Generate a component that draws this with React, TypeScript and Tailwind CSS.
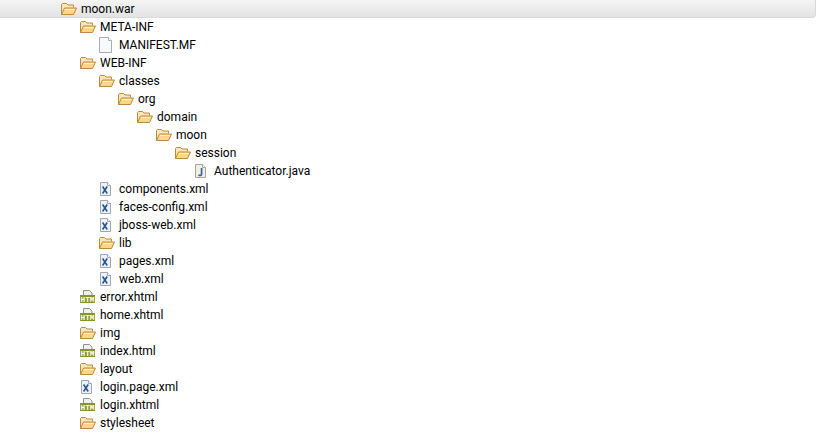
const rows: { name: string; depth: number; icon: 'folder' | 'file' | 'xml' | 'java' | 'html' }[] = [
  { name: 'moon.war', depth: 0, icon: 'folder' },
  { name: 'META-INF', depth: 1, icon: 'folder' },
  { name: 'MANIFEST.MF', depth: 2, icon: 'file' },
  { name: 'WEB-INF', depth: 1, icon: 'folder' },
  { name: 'classes', depth: 2, icon: 'folder' },
  { name: 'org', depth: 3, icon: 'folder' },
  { name: 'domain', depth: 4, icon: 'folder' },
  { name: 'moon', depth: 5, icon: 'folder' },
  { name: 'session', depth: 6, icon: 'folder' },
  { name: 'Authenticator.java', depth: 7, icon: 'java' },
  { name: 'components.xml', depth: 2, icon: 'xml' },
  { name: 'faces-config.xml', depth: 2, icon: 'xml' },
  { name: 'jboss-web.xml', depth: 2, icon: 'xml' },
  { name: 'lib', depth: 2, icon: 'folder' },
  { name: 'pages.xml', depth: 2, icon: 'xml' },
  { name: 'web.xml', depth: 2, icon: 'xml' },
  { name: 'error.xhtml', depth: 1, icon: 'html' },
  { name: 'home.xhtml', depth: 1, icon: 'html' },
  { name: 'img', depth: 1, icon: 'folder' },
  { name: 'index.html', depth: 1, icon: 'html' },
  { name: 'layout', depth: 1, icon: 'folder' },
  { name: 'login.page.xml', depth: 1, icon: 'xml' },
  { name: 'login.xhtml', depth: 1, icon: 'html' },
  { name: 'stylesheet', depth: 1, icon: 'folder' },
];

function FolderIcon() {
  return (
    <svg width="16" height="16" viewBox="0 0 16 16" className="shrink-0">
      <path d="M.5 13.5V3.5l1-1h4l1.5 1.5h5.5v2.5" fill="#f9e6bb" stroke="#b98a3f" strokeLinejoin="round" />
      <path d="M.5 13.5h12l3-6.5h-12z" fill="#f8d68e" stroke="#b98a3f" strokeLinejoin="round" />
      <path d="M4 8h9.8l-.5 1H3.6z" fill="#fdf0cf" />
    </svg>
  );
}

function FileIcon() {
  return (
    <svg width="16" height="16" viewBox="0 0 16 16" className="shrink-0">
      <path d="M.5 .5h9l3 3v12H.5z" fill="#f8f9fa" stroke="#a6adb8" />
      <path d="M9.5 .5v3h3" fill="#ffffff" stroke="#a6adb8" />
    </svg>
  );
}

function SmallPage({ tint, children }: { tint: string; children: React.ReactNode }) {
  return (
    <svg width="16" height="16" viewBox="0 0 16 16" className="shrink-0">
      <path d="M1.5 1.5h7l3 3v10h-10z" fill={tint} stroke="#9ea6b2" />
      <path d="M8.5 1.5v3h3" fill="#ffffff" stroke="#9ea6b2" />
      {children}
    </svg>
  );
}

function HtmlIcon() {
  return (
    <svg width="16" height="16" viewBox="0 0 16 16" className="shrink-0">
      <path d="M3.5 1.5h6l2.5 2.5v4H3.5z" fill="#eef0ea" stroke="#8d9487" />
      <rect x="0" y="6" width="15" height="8" fill="#8a9528" />
      <text x="7.5" y="12.8" textAnchor="middle" fontSize="7.5" fontWeight="700" fill="#ffffff" fontFamily="'Liberation Mono', monospace" textLength="14" lengthAdjust="spacingAndGlyphs">HTM</text>
    </svg>
  );
}

function RowIcon({ kind }: { kind: string }) {
  if (kind === 'folder') return <FolderIcon />;
  if (kind === 'html') return <HtmlIcon />;
  if (kind === 'file') return <FileIcon />;
  if (kind === 'java') {
    return (
      <SmallPage tint="#f6efd9">
        <path d="M7.6 5v6c0 1.5-1.5 1.8-3.2 1.1" fill="none" stroke="#2f66a8" strokeWidth="1.7" />
      </SmallPage>
    );
  }
  return (
    <SmallPage tint="#eef2f8">
      <path d="M3.6 5.5l4.6 7M8.2 5.5l-4.6 7" fill="none" stroke="#28558f" strokeWidth="1.6" />
    </SmallPage>
  );
}

export default function App() {
  return (
    <div className="w-[818px] h-[433px] overflow-hidden bg-white font-['Roboto','Open_Sans',sans-serif] text-xs text-black">
      {rows.map((row, i) => (
        <div
          key={row.name + i}
          className={
            i === 0
              ? 'flex h-[18px] w-[816px] items-center gap-1 rounded-br-sm border-r border-b border-[#d9d9d9] bg-gradient-to-b from-[#f5f5f5] to-[#e3e3e3]'
              : 'flex h-[18px] items-center gap-1'
          }
          style={{ paddingLeft: 61 + row.depth * 19 }}
        >
          <RowIcon kind={row.icon} />
          <span className="whitespace-nowrap">{row.name}</span>
        </div>
      ))}
    </div>
  );
}
